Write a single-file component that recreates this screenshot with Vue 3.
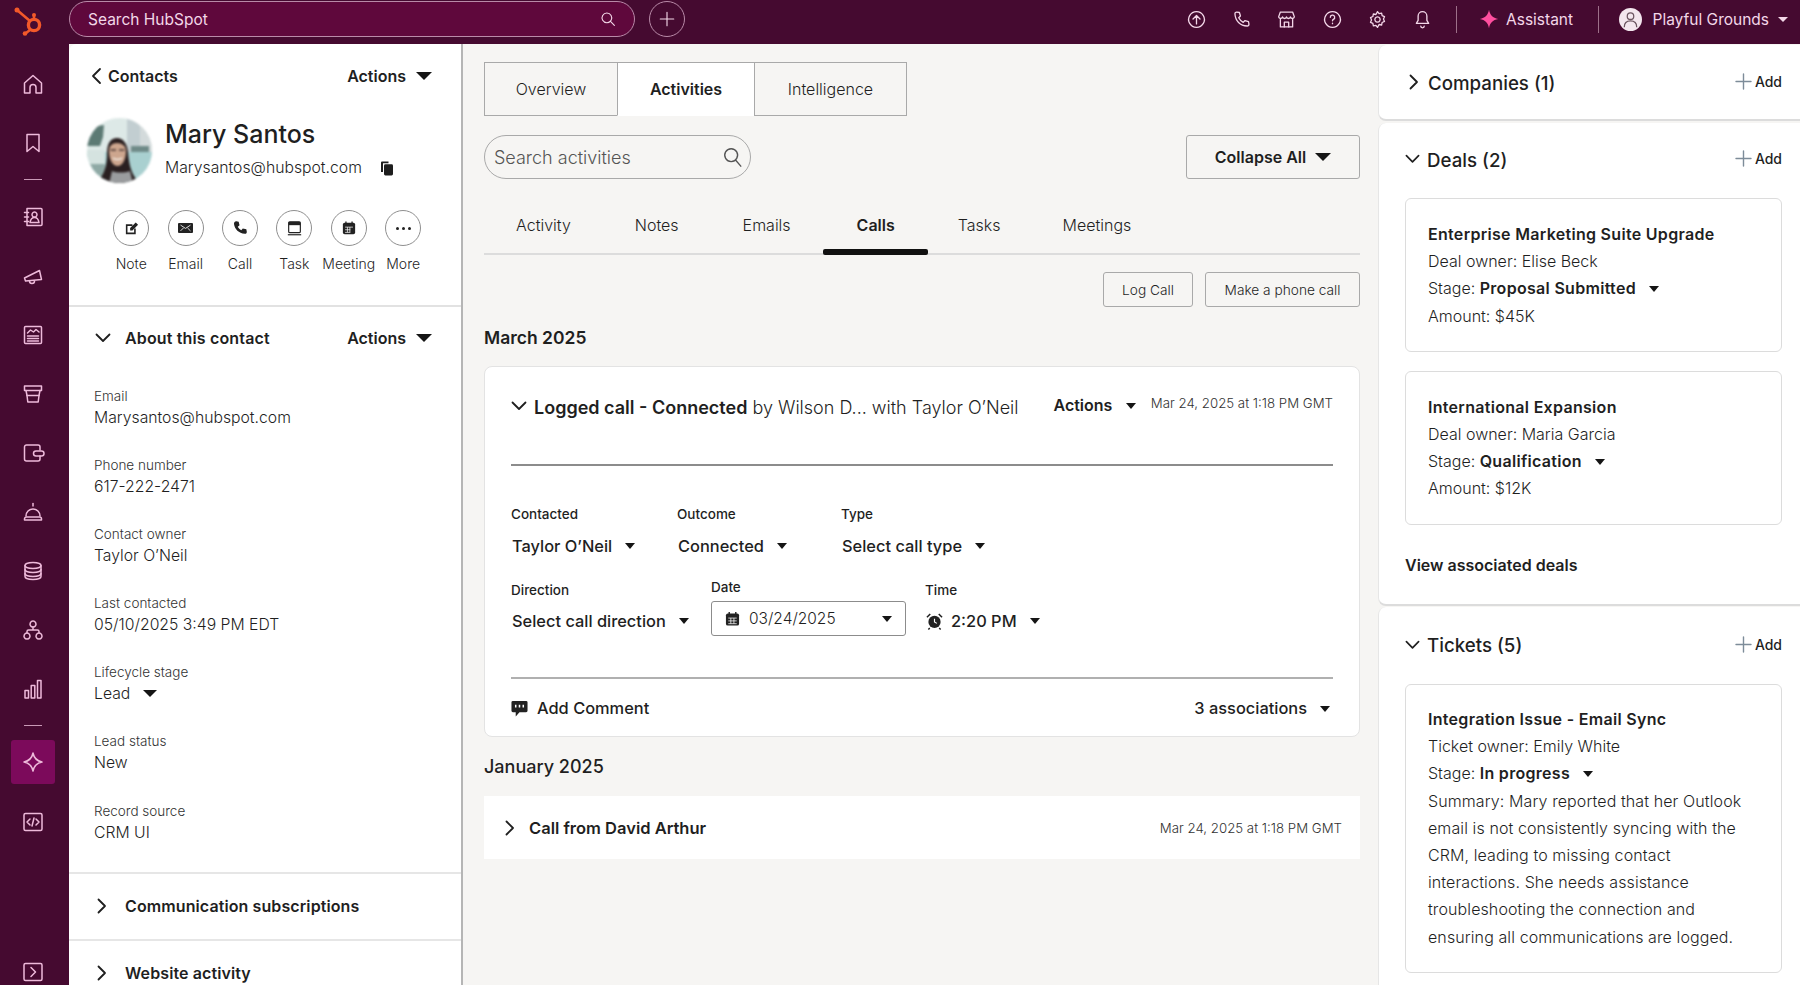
<template>
  <div class="page">
    <header class="topbar">
      <div class="logo-cell">
        <svg width="38" height="38" viewBox="0 0 38 38">
          <g fill="none" stroke="#f2592a" stroke-width="2.6">
            <circle cx="25" cy="22" r="5.6" stroke-width="3.4" />
            <path d="M8 7 21 18M25 15v-2M21 27l-4 3" />
          </g>
          <g fill="#f2592a">
            <circle cx="8" cy="7" r="2.5" />
            <circle cx="25" cy="12" r="2" />
            <circle cx="16" cy="30.5" r="2.3" />
          </g>
        </svg>
      </div>
      <div class="global-search">
        <span>Search HubSpot</span>
        <svg width="18" height="18" viewBox="0 0 24 24" class="line light"><path d="M10.5 4a6.5 6.5 0 1 0 .01 0zM15.3 15.3 20.5 20.5" /></svg>
      </div>
      <div class="plus-btn">
        <svg width="18" height="18" viewBox="0 0 24 24" class="line light"><path d="M12 3v18M3 12h18" /></svg>
      </div>
      <div class="top-right">
        <span v-for="icon in topIcons" :key="icon.name" class="top-icon">
          <svg width="21" height="21" viewBox="0 0 24 24" class="line light"><path v-for="d in icon.paths" :key="d" :d="d" /></svg>
        </span>
        <i class="top-sep"></i>
        <svg class="star" width="20" height="20" viewBox="0 0 24 24"><path fill="#ff4f9f" d="M12 1c1.2 6.5 4.5 9.8 11 11-6.5 1.2-9.8 4.5-11 11-1.2-6.5-4.5-9.8-11-11 6.5-1.2 9.8-4.5 11-11z" /></svg>
        <span class="assistant">Assistant</span>
        <i class="top-sep second"></i>
        <svg class="user-pic" width="23" height="23" viewBox="0 0 24 24">
          <circle cx="12" cy="12" r="12" fill="#f3e6ee" />
          <g fill="none" stroke="#6b5560" stroke-width="1.3">
            <circle cx="12" cy="8.5" r="3.4" />
            <path d="M5.5 20c0-4.5 2.7-6.5 6.5-6.5s6.5 2 6.5 6.5" />
          </g>
        </svg>
        <span class="account">Playful Grounds</span>
        <i class="caret tiny light-caret"></i>
      </div>
    </header>

    <div class="body">
      <nav class="rail">
        <template v-for="item in railItems" :key="item.name">
          <i v-if="item.sep" class="rail-sep"></i>
          <div v-else class="rail-item" :class="{ active: item.active, bottom: item.bottom }">
            <svg width="24" height="24" viewBox="0 0 24 24" class="line pink"><path v-for="d in item.paths" :key="d" :d="d" /></svg>
          </div>
        </template>
      </nav>

      <aside class="contact-panel">
        <div class="contacts-row">
          <div class="back">
            <svg width="14" height="18" viewBox="0 0 14 18" class="line dark"><path d="M10 2 3 9l7 7" /></svg>
            <span>Contacts</span>
          </div>
          <div class="actions-link">Actions <i class="caret big"></i></div>
        </div>

        <div class="profile">
          <svg class="avatar" width="65" height="65" viewBox="0 0 65 65">
            <defs><clipPath id="avatar-clip"><circle cx="32.5" cy="32.5" r="32.5" /></clipPath></defs>
            <g clip-path="url(#avatar-clip)">
              <rect width="65" height="65" fill="#dde9e7" />
              <rect x="40" y="0" width="13" height="34" fill="#c2ced1" />
              <rect x="53" y="8" width="12" height="28" fill="#d3dadb" />
              <rect x="0" y="34" width="65" height="31" fill="#a9d0d0" />
              <path d="M2 9l15-2-1 12-3 9H0z" fill="#5c7a74" />
              <rect x="0" y="32" width="18" height="14" fill="#d5e3e0" />
              <rect x="0" y="46" width="18" height="19" fill="#8fa9a5" />
              <rect x="44" y="28" width="18" height="6" fill="#6f8a88" />
              <path d="M12 62c5-6 8-14 8-27 0-10 4-15 10-15s10 5 11 14c1 12 3 20 8 27l-4 7H14z" fill="#2a1f20" />
              <path d="M22 33c0-5 3-8 8-8s9 3 9 8c0 9-4 15-8.500 15S22 42 22 33z" fill="#cda68e" />
              <path d="M23.500 32h5.500M32 32h5.500" stroke="#4a3733" stroke-width="1.3" />
              <path d="M26 40c2 2 7 2 9 0" stroke="#f6f1ea" stroke-width="1.6" fill="none" />
              <path d="M22 66l3-13c4 2 13 2 18 0l3 13z" fill="#9a9c9e" />
            </g>
          </svg>
          <div class="profile-text">
            <div class="name">Mary Santos</div>
            <div class="email">
              <span>Marysantos@hubspot.com</span>
              <svg width="14" height="15" viewBox="0 0 14 15" fill="#1d1d1d"><path d="M1 1.5A1 1 0 0 1 2 .5h6.5v1.8H3v8.7H1z" /><rect x="4" y="3.2" width="9" height="11.3" rx="1.4" /></svg>
            </div>
          </div>
        </div>

        <div class="quick-actions">
          <div v-for="action in quickActions" :key="action.label" class="quick">
            <span class="quick-circle">
              <svg v-if="action.label === 'Note'" width="15" height="15" viewBox="0 0 16 16"><path d="M2 3.5h7v1.7H3.700v7.100h7.100V8h1.700v6H2z" fill="#222" /><path d="M6.500 7.500 12.500 1.500 15 4 9 10H6.500z" fill="#222" /></svg>
              <svg v-else-if="action.label === 'Email'" width="15" height="12" viewBox="0 0 18 14"><rect y="1" width="18" height="12" rx="1.2" fill="#222" /><path d="M3 3.500 9 7.500l6-4M3 10.500l3.500-3.500M15 10.500 11.500 7" fill="none" stroke="#fff" stroke-width="1" /></svg>
              <svg v-else-if="action.label === 'Call'" width="16" height="16" viewBox="0 0 24 24"><path d="M6.500 1.800 10 2.500l1.300 5.300-2.600 2.300c1 2.200 3 4.200 5.200 5.200l2.300-2.600 5.300 1.300.7 3.500c.2 1.600-1 3.500-3 3.200C10 19.800 4.200 14 3 6c-.3-2.300 1.800-4.500 3.500-4.200z" fill="#222" /></svg>
              <svg v-else-if="action.label === 'Task'" width="15" height="15" viewBox="0 0 18 18"><rect x="2" y="1" width="14" height="13" rx="1.5" fill="none" stroke="#222" stroke-width="1.4" /><rect x="2" y="1" width="14" height="4" fill="#222" /><path d="M1 16.500h16" stroke="#222" stroke-width="1.4" /></svg>
              <svg v-else-if="action.label === 'Meeting'" width="14" height="14" viewBox="0 0 16 16"><rect x="1" y="2" width="14" height="13" rx="2" fill="#222" /><path d="M4.500 .5v3M11.500 .5v3" stroke="#222" stroke-width="1.5" /><path d="M3.500 7h9M3.500 10h6M6.200 7v6M9 7v6M3.500 13h6" stroke="#fff" stroke-width=".8" /></svg>
              <span v-else class="dots">
                <i></i><i></i><i></i>
              </span>
            </span>
            <span class="quick-label">{{ action.label }}</span>
          </div>
        </div>

        <div class="about-row">
          <div class="about-title">
            <svg width="16" height="10" viewBox="0 0 16 10" class="line dark"><path d="M1.5 1.5 8 8l6.5-6.5" /></svg>
            <span>About this contact</span>
          </div>
          <div class="actions-link">Actions <i class="caret big"></i></div>
        </div>

        <div class="fields">
          <div v-for="field in contactFields" :key="field.label" class="field">
            <div class="field-label">{{ field.label }}</div>
            <div class="field-value">{{ field.value }}<i v-if="field.caret" class="caret medium"></i></div>
          </div>
        </div>

        <div class="fold-row">
          <svg width="10" height="16" viewBox="0 0 10 16" class="line dark"><path d="M1.5 1.5 8 8l-6.5 6.500" /></svg>
          <span>Communication subscriptions</span>
        </div>
        <div class="fold-row">
          <svg width="10" height="16" viewBox="0 0 10 16" class="line dark"><path d="M1.5 1.5 8 8l-6.5 6.500" /></svg>
          <span>Website activity</span>
        </div>
      </aside>

      <main class="center">
        <div class="view-tabs">
          <div class="view-tab w1">Overview</div>
          <div class="view-tab w2 current">Activities</div>
          <div class="view-tab w3">Intelligence</div>
        </div>

        <div class="tool-row">
          <div class="activity-search">
            <span>Search activities</span>
            <svg width="22" height="22" viewBox="0 0 24 24" class="line grey"><path d="M10 3a7 7 0 1 0 .01 0zM15 15.5 20.500 22" /></svg>
          </div>
          <div class="collapse-btn">Collapse All <i class="caret big"></i></div>
        </div>

        <div class="sub-tabs">
          <div v-for="tab in subTabs" :key="tab" class="sub-tab" :class="{ selected: tab === 'Calls' }">{{ tab }}</div>
        </div>

        <div class="log-row">
          <div class="small-btn">Log Call</div>
          <div class="small-btn phone">Make a phone call</div>
        </div>

        <h3 class="month">March 2025</h3>

        <section class="call-card">
          <div class="call-head">
            <svg width="16" height="10" viewBox="0 0 16 10" class="line dark call-chev"><path d="M1.5 1.5 8 8l6.5-6.5" /></svg>
            <div class="call-title"><b>Logged call - Connected</b> by Wilson D... with Taylor O’Neil</div>
            <div class="call-actions">Actions <i class="caret small"></i></div>
            <div class="call-date">Mar 24, 2025 at 1:18 PM GMT</div>
          </div>

          <div class="form-row first">
            <div v-for="col in firstRow" :key="col.label" class="form-col" :style="{ width: col.width + 'px' }">
              <div class="form-label">{{ col.label }}</div>
              <div class="form-value">{{ col.value }}<i class="caret small"></i></div>
            </div>
          </div>

          <div class="form-row second-row">
            <div class="form-col dropped direction">
              <div class="form-label">Direction</div>
              <div class="form-value">Select call direction<i class="caret small"></i></div>
            </div>
            <div class="form-col date-col">
              <div class="form-label">Date</div>
              <div class="date-input">
                <svg width="15" height="16" viewBox="0 0 16 16"><rect x="1" y="2" width="14" height="13" rx="2" fill="#222" /><path d="M4.5 .5v3M11.5 .5v3" stroke="#222" stroke-width="1.5" /><path d="M3.5 7h9M3.5 10h9M3.5 13h9M6.2 7v6M9.5 7v6" stroke="#fff" stroke-width=".8" /></svg>
                <span>03/24/2025</span>
                <i class="caret small"></i>
              </div>
            </div>
            <div class="form-col dropped">
              <div class="form-label">Time</div>
              <div class="form-value">
                <svg class="alarm" width="17" height="18" viewBox="0 0 18 18"><circle cx="9" cy="10" r="6.5" fill="#222" /><path d="M9 6.5V10l2.5 1.5" stroke="#fff" stroke-width="1.2" fill="none" /><path d="M1 5 4.5 1.500M17 5l-3.500-3.500M4 16.500l-1.500 1.500M14 16.500l1.500 1.500" stroke="#222" stroke-width="1.6" /></svg>
                2:20 PM<i class="caret small"></i>
              </div>
            </div>
          </div>

          <div class="call-foot">
            <div class="comment">
              <svg width="17" height="17" viewBox="0 0 18 18"><path d="M2 1h14a1.5 1.5 0 0 1 1.500 1.500v9A1.500 1.500 0 0 1 16 13H9l-4 4.500V13H2A1.500 1.500 0 0 1 .5 11.500v-9A1.500 1.500 0 0 1 2 1z" fill="#222" /><path d="M5 5v3M9 5v3M13 5v3" stroke="#fff" stroke-width="1.6" /></svg>
              <span>Add Comment</span>
            </div>
            <div class="assoc">3 associations<i class="caret small"></i></div>
          </div>
        </section>

        <h3 class="month jan">January 2025</h3>

        <section class="call-row">
          <svg width="10" height="16" viewBox="0 0 10 16" class="line dark"><path d="M1.5 1.5 8 8l-6.5 6.500" /></svg>
          <b>Call from David Arthur</b>
          <span class="call-date">Mar 24, 2025 at 1:18 PM GMT</span>
        </section>
      </main>

      <aside class="side">
        <section class="side-card companies">
          <div class="side-head">
            <svg width="10" height="16" viewBox="0 0 10 16" class="line dark chev-r"><path d="M1.5 1.5 8 8l-6.5 6.500" /></svg>
            <h4>Companies (1)</h4>
            <span class="add"><svg width="17" height="17" viewBox="0 0 17 17" class="line slate"><path d="M8.5 1v15M1 8.5h15" /></svg>Add</span>
          </div>
        </section>

        <section class="side-card deals">
          <div class="side-head">
            <svg width="15" height="10" viewBox="0 0 16 10" class="line dark chev-d"><path d="M1.5 1.5 8 8l6.5-6.5" /></svg>
            <h4>Deals (2)</h4>
            <span class="add"><svg width="17" height="17" viewBox="0 0 17 17" class="line slate"><path d="M8.5 1v15M1 8.5h15" /></svg>Add</span>
          </div>
          <div v-for="deal in deals" :key="deal.title" class="record">
            <div class="record-title">{{ deal.title }}</div>
            <div>Deal owner: {{ deal.owner }}</div>
            <div>Stage: <b>{{ deal.stage }}</b><i class="caret small stage-caret"></i></div>
            <div>Amount: {{ deal.amount }}</div>
          </div>
          <div class="view-deals">View associated deals</div>
        </section>

        <section class="side-card tickets">
          <div class="side-head">
            <svg width="15" height="10" viewBox="0 0 16 10" class="line dark chev-d"><path d="M1.5 1.5 8 8l6.5-6.5" /></svg>
            <h4>Tickets (5)</h4>
            <span class="add"><svg width="17" height="17" viewBox="0 0 17 17" class="line slate"><path d="M8.5 1v15M1 8.5h15" /></svg>Add</span>
          </div>
          <div class="record">
            <div class="record-title">Integration Issue - Email Sync</div>
            <div>Ticket owner: Emily White</div>
            <div>Stage: <b>In progress</b><i class="caret small stage-caret"></i></div>
            <div v-for="line in summaryLines" :key="line" class="summary">{{ line }}</div>
          </div>
        </section>
      </aside>
    </div>
  </div>
</template>

<script setup>
const topIcons = [
  { name: 'upload', paths: ['M12 3a9 9 0 1 0 .01 0z', 'M12 17V8M8 11.5 12 7.5l4 4'] },
  { name: 'phone', paths: ['M6.6 3.5l3 .5 1.2 4-2 2a12 12 0 0 0 5.2 5.2l2-2 4 1.2.5 3c.1 1-.8 2.1-2 2C10.5 19.2 4.8 13.5 4.5 5.5c0-1.1 1-2.1 2.1-2z'] },
  { name: 'store', paths: ['M5 3.5h14l2 5.5a2.3 2.3 0 0 1-4.5 0 2.3 2.3 0 0 1-4.5 0 2.3 2.3 0 0 1-4.5 0 2.3 2.3 0 0 1-4.5 0z', 'M5 12v8.5h14V12', 'M9.5 20.5V15h5v5.5'] },
  { name: 'help', paths: ['M12 3a9 9 0 1 0 .01 0z', 'M9.5 9.5a2.5 2.5 0 1 1 3.5 2.3c-.7.4-1 .9-1 1.7', 'M12 16.2v.6'] },
  { name: 'settings', paths: ['M12 3l1.8 2.3 2.9-.6.6 2.9 2.7 1.2-1.2 2.7 1.2 2.7-2.7 1.2-.6 2.9-2.9-.6L12 21l-1.8-2.3-2.9.6-.6-2.9-2.7-1.2 1.2-2.7-1.2-2.7 2.7-1.2.6-2.9 2.9.6z', 'M12 9a3 3 0 1 0 .01 0z'] },
  { name: 'bell', paths: ['M12 3a5 5 0 0 0-5 5v5l-2 3.5h14L17 13V8a5 5 0 0 0-5-5z', 'M10 19.5a2 2 0 0 0 4 0'] }
]

const railItems = [
  { name: 'home', paths: ['M3.5 11 12 3.5l8.5 7.5v10H15v-5.5a3 3 0 0 0-6 0V21H3.5z'] },
  { name: 'bookmarks', paths: ['M6 3.5h12v17l-6-5-6 5z'] },
  { name: 'sep1', sep: true },
  { name: 'contacts', paths: ['M6 3.5h14a1 1 0 0 1 1 1v15a1 1 0 0 1-1 1H6z', 'M3.5 7.5h4M3.5 12h4M3.5 16.5h4', 'M13.5 7a2.5 2.5 0 1 0 .01 0z', 'M9 17.5c.5-3 2.2-5 4.5-5s4 2 4.5 5z'] },
  { name: 'marketing', paths: ['M3.5 14 18.5 6.5l2 9-16 1.5z', 'M8.5 17a2.5 2.5 0 0 0 5 0'] },
  { name: 'content', paths: ['M4.5 3.5h15a1 1 0 0 1 1 1v15a1 1 0 0 1-1 1h-15a1 1 0 0 1-1-1v-15a1 1 0 0 1 1-1z', 'M6.5 10l3-3 3 2 2.5-2.5L18 9', 'M6.5 13h11M6.5 15.5h11M6.5 18h11'] },
  { name: 'commerce', paths: ['M3.5 4h17v4.5h-17z', 'M5 8.5l1 5h12l1-5', 'M6 13.5l.8 6.5h10.4l.8-6.5'] },
  { name: 'wallet', paths: ['M19 9V6a2 2 0 0 0-2-2H5.5a2 2 0 0 0-2 2v12a2 2 0 0 0 2 2H17a2 2 0 0 0 2-2v-3', 'M15 10h5.5a1.7 1.7 0 0 1 0 5H15a2.5 2.5 0 0 1 0-5z'] },
  { name: 'service', paths: ['M12 3.5V6', 'M5 16a7 7 0 0 1 14 0', 'M3.5 20v-1a2 2 0 0 1 2-2h13a2 2 0 0 1 2 2v1z'] },
  { name: 'data', paths: ['M4 6.5c0-1.7 3.6-3 8-3s8 1.3 8 3-3.6 3-8 3-8-1.3-8-3z', 'M4 6.5v11c0 1.7 3.6 3 8 3s8-1.3 8-3v-11', 'M4 10.5c0 1.7 3.6 3 8 3s8-1.3 8-3', 'M4 14.5c0 1.7 3.6 3 8 3s8-1.3 8-3'] },
  { name: 'automation', paths: ['M12 3a3 3 0 1 0 .01 0z', 'M6 15a3 3 0 1 0 .01 0z', 'M18 15a3 3 0 1 0 .01 0z', 'M12 9v3M6 15v-1.5A1.5 1.5 0 0 1 7.5 12h9a1.5 1.5 0 0 1 1.5 1.5V15'] },
  { name: 'reports', paths: ['M4 13.5h3.5V21H4zM10.2 8.5h3.6V21h-3.6zM16.5 3.5H20V21h-3.5z'] },
  { name: 'sep2', sep: true },
  { name: 'breeze', active: true, paths: ['M12 3c1 5 4 8 9 9-5 1-8 4-9 9-1-5-4-8-9-9 5-1 8-4 9-9z'] },
  { name: 'dev', paths: ['M4.5 3.5h15A1.5 1.5 0 0 1 21 5v14a1.5 1.5 0 0 1-1.5 1.5h-15A1.5 1.5 0 0 1 3 19V5a1.5 1.5 0 0 1 1.5-1.5z', 'M9 9l-3 3 3 3M15 9l3 3-3 3M13 8l-2 8'] },
  { name: 'expand', bottom: true, paths: ['M4.5 3.5h15A1.5 1.5 0 0 1 21 5v14a1.5 1.5 0 0 1-1.5 1.5h-15A1.5 1.5 0 0 1 3 19V5a1.5 1.5 0 0 1 1.5-1.5z', 'M10 7.5l4.5 4.5-4.5 4.5'] }
]

const quickActions = [
  { label: 'Note' },
  { label: 'Email' },
  { label: 'Call' },
  { label: 'Task' },
  { label: 'Meeting' },
  { label: 'More' }
]

const contactFields = [
  { label: 'Email', value: 'Marysantos@hubspot.com' },
  { label: 'Phone number', value: '617-222-2471' },
  { label: 'Contact owner', value: 'Taylor O’Neil' },
  { label: 'Last contacted', value: '05/10/2025 3:49 PM EDT' },
  { label: 'Lifecycle stage', value: 'Lead', caret: true },
  { label: 'Lead status', value: 'New' },
  { label: 'Record source', value: 'CRM UI' }
]

const subTabs = ['Activity', 'Notes', 'Emails', 'Calls', 'Tasks', 'Meetings']

const firstRow = [
  { label: 'Contacted', value: 'Taylor O’Neil', width: 166 },
  { label: 'Outcome', value: 'Connected', width: 164 },
  { label: 'Type', value: 'Select call type', width: 200 }
]

const deals = [
  { title: 'Enterprise Marketing Suite Upgrade', owner: 'Elise Beck', stage: 'Proposal Submitted', amount: '$45K' },
  { title: 'International Expansion', owner: 'Maria Garcia', stage: 'Qualification', amount: '$12K' }
]

const summaryLines = [
  'Summary: Mary reported that her Outlook',
  'email is not consistently syncing with the',
  'CRM, leading to missing contact',
  'interactions. She needs assistance',
  'troubleshooting the connection and',
  'ensuring all communications are logged.'
]
</script>

<style>
html,
body {
  margin: 0;
  background: #f6f5f3;
}
</style>

<style scoped>
.page {
  width: 1800px;
  height: 985px;
  overflow: hidden;
  display: flex;
  flex-direction: column;
  font-family: Inter, "Noto Sans", sans-serif;
  color: #1f1f1f;
  background: #f6f5f3;
}

.line {
  fill: none;
  stroke-width: 1.5;
  stroke-linecap: round;
  stroke-linejoin: round;
}
.light { stroke: #f3d7e8; }
.pink { stroke: #eebada; }
.dark { stroke: #1f1f1f; stroke-width: 1.8; }
.grey { stroke: #555; }
.slate { stroke: #7d8c99; stroke-width: 1.4; }

.caret {
  display: inline-block;
  border-style: solid;
  border-color: #151515 transparent transparent;
}
.caret.big { border-width: 8px 8px 0; }
.caret.medium { border-width: 7px 7px 0; margin-left: 13px; vertical-align: 2px; }
.caret.small { border-width: 6px 5px 0; margin-left: 13px; vertical-align: 2px; }
.caret.tiny { border-width: 5px 5px 0; }
.light-caret { border-top-color: #f3d7e8; margin-left: 9px; }

/* top bar */
.topbar {
  height: 44px;
  flex: none;
  display: flex;
  align-items: center;
  background: #450a30;
}
.logo-cell {
  width: 69px;
  height: 44px;
  display: flex;
  align-items: center;
  padding-left: 9px;
  box-sizing: border-box;
}
.global-search {
  width: 566px;
  height: 36px;
  box-sizing: border-box;
  margin-bottom: 6px;
  padding: 0 17px 0 18px;
  display: flex;
  align-items: center;
  justify-content: space-between;
  border: 1px solid #b98aa8;
  border-radius: 18px;
  background: #5f083c;
  color: #f3d7e8;
  font-size: 15.5px;
}
.plus-btn {
  width: 36px;
  height: 36px;
  box-sizing: border-box;
  margin: 0 0 6px 14px;
  border: 1px solid #b98aa8;
  border-radius: 50%;
  display: flex;
  align-items: center;
  justify-content: center;
}
.top-right {
  margin-left: auto;
  margin-bottom: 6px;
  padding-right: 12px;
  height: 38px;
  display: flex;
  align-items: center;
  color: #f3d7e8;
  font-size: 15.5px;
}
.top-icon {
  width: 45.3px;
  display: flex;
  justify-content: center;
}
.top-sep {
  width: 1px;
  height: 27px;
  margin-left: 10px;
  background: #9d7089;
}
.star { margin: 0 7px 0 22.5px; }
.assistant { width: 71px; }
.top-sep.second { margin-left: 20.8px; }
.user-pic { margin: 0 10px 0 20.7px; }

.body {
  flex: 1;
  min-height: 0;
  display: flex;
}

/* left rail */
.rail {
  width: 69px;
  flex: none;
  padding: 10px 3px 0 0;
  box-sizing: border-box;
  display: flex;
  flex-direction: column;
  align-items: center;
  background: #450a30;
}
.rail-item {
  width: 44px;
  height: 59px;
  flex: none;
  display: flex;
  align-items: center;
  justify-content: center;
}
.rail-item.active {
  height: 44px;
  margin: 7px 0 8px;
  border-radius: 3px;
  background: #7c0a5b;
}
.rail-item.bottom {
  height: 26px;
  margin-top: auto;
}
.rail-sep {
  width: 18px;
  height: 1px;
  flex: none;
  margin: 7px 0;
  background: #c99ab6;
}

/* contact column */
.contact-panel {
  width: 394px;
  flex: none;
  box-sizing: border-box;
  border-right: 2px solid #b5b5b5;
  border-radius: 8px 0 0 0;
  background: #fff;
}
.contacts-row {
  height: 28px;
  padding: 18px 29px 0 21px;
  display: flex;
  align-items: center;
  justify-content: space-between;
}
.back {
  display: flex;
  align-items: center;
  gap: 4px;
  font-size: 16px;
  font-weight: 600;
}
.actions-link {
  display: flex;
  align-items: center;
  gap: 10px;
  font-size: 16px;
  font-weight: 600;
}
.profile {
  margin-top: 28px;
  padding-left: 18px;
  display: flex;
  gap: 13px;
}
.avatar {
  flex: none;
  filter: blur(0.8px);
}
.name {
  font-size: 25px;
  line-height: 32px;
  font-weight: 500;
}
.email {
  margin-top: 7px;
  display: flex;
  align-items: center;
  gap: 18px;
  font-size: 15.75px;
  line-height: 22px;
  font-weight: 300;
}
.quick-actions {
  margin-top: 27px;
  padding: 0 0 32px 35px;
  display: flex;
  border-bottom: 2px solid #e2e2e2;
}
.quick {
  width: 54.4px;
  display: flex;
  flex-direction: column;
  align-items: center;
}
.quick-circle {
  width: 36px;
  height: 36px;
  box-sizing: border-box;
  display: flex;
  align-items: center;
  justify-content: center;
  border: 1.5px solid #8f8f8f;
  border-radius: 50%;
}
.dots {
  display: flex;
  gap: 3px;
}
.dots i {
  width: 3px;
  height: 3px;
  border-radius: 50%;
  background: #222;
}
.quick-label {
  margin-top: 9px;
  font-size: 14px;
  line-height: 18px;
  font-weight: 300;
}
.about-row {
  height: 28px;
  margin-top: 17px;
  padding: 0 29px 0 26px;
  display: flex;
  align-items: center;
  justify-content: space-between;
}
.about-title {
  display: flex;
  align-items: center;
  gap: 14px;
  font-size: 16px;
  font-weight: 600;
  letter-spacing: 0.15px;
}
.fields {
  margin-top: 35px;
  padding: 0 0 28px 25px;
  display: flex;
  flex-direction: column;
  gap: 27.1px;
  border-bottom: 2px solid #e6e6e6;
}
.field-label {
  font-size: 13.5px;
  line-height: 18px;
  font-weight: 300;
  color: #333;
}
.field-value {
  margin-top: 2px;
  font-size: 15.75px;
  line-height: 22px;
  font-weight: 300;
}
.fold-row {
  height: 65px;
  padding-left: 28px;
  display: flex;
  align-items: center;
  gap: 18px;
  font-size: 16px;
  font-weight: 600;
  letter-spacing: 0.1px;
  border-bottom: 2px solid #e6e6e6;
}

/* activity column */
.center {
  flex: 1;
  min-width: 0;
  padding: 18px 18px 0 21px;
}
.view-tabs {
  display: flex;
}
.view-tab {
  height: 54px;
  box-sizing: border-box;
  display: flex;
  align-items: center;
  justify-content: center;
  border: 1.5px solid #a9a9a9;
  border-right-width: 0;
  font-size: 16px;
  font-weight: 300;
}
.view-tab:last-child {
  border-right-width: 1.5px;
}
.w1 { width: 133px; }
.w2 { width: 137px; }
.w3 { width: 153px; }
.view-tab.current {
  background: #fff;
  border-bottom-color: #fff;
  font-weight: 600;
}
.tool-row {
  margin-top: 19px;
  display: flex;
  justify-content: space-between;
}
.activity-search {
  width: 267px;
  height: 44px;
  box-sizing: border-box;
  padding: 0 6px 0 9px;
  display: flex;
  align-items: center;
  justify-content: space-between;
  border: 1.5px solid #a9a9a9;
  border-radius: 22px;
  font-size: 18px;
  font-weight: 300;
  color: #555;
}
.collapse-btn {
  width: 174px;
  height: 44px;
  box-sizing: border-box;
  display: flex;
  align-items: center;
  justify-content: center;
  gap: 9px;
  border: 1.5px solid #a9a9a9;
  border-radius: 3px;
  font-size: 16px;
  font-weight: 600;
}
.sub-tabs {
  height: 56px;
  margin-top: 18px;
  display: flex;
  border-bottom: 2px solid #dcdcdc;
}
.sub-tab {
  position: relative;
  padding: 0 32px;
  display: flex;
  align-items: center;
  font-size: 16px;
  font-weight: 300;
}
.sub-tab:last-child {
  margin-left: -2px;
}
.sub-tab.selected {
  padding: 0 31px 0 34px;
  font-weight: 600;
}
.sub-tab.selected::after {
  content: "";
  position: absolute;
  left: 0;
  right: -2px;
  bottom: -2px;
  height: 6px;
  border-radius: 2px;
  background: #111;
}
.log-row {
  margin-top: 17px;
  display: flex;
  justify-content: flex-end;
  gap: 12px;
}
.small-btn {
  width: 90px;
  height: 35px;
  box-sizing: border-box;
  display: flex;
  align-items: center;
  justify-content: center;
  border: 1.5px solid #a9a9a9;
  border-radius: 3px;
  font-size: 13.7px;
  font-weight: 300;
}
.small-btn.phone {
  width: 155px;
}
.month {
  margin: 18px 0 15px;
  font-size: 17.5px;
  line-height: 26px;
  font-weight: 600;
}
.month.jan {
  margin: 17px 0 16px;
  font-size: 18px;
  font-weight: 500;
}
.call-card {
  height: 371px;
  box-sizing: border-box;
  padding: 0 26px;
  border: 1px solid #e3e3e3;
  border-radius: 8px;
  background: #fff;
}
.call-head {
  height: 99px;
  box-sizing: border-box;
  padding-top: 22px;
  display: flex;
  align-items: flex-start;
  border-bottom: 2px solid #8c8c8c;
}
.call-chev {
  margin-top: 12px;
}
.call-title {
  margin: 6px 35px 0 7px;
  font-size: 18px;
  line-height: 26px;
  font-weight: 300;
  white-space: nowrap;
}
.call-title b {
  font-weight: 600;
}
.call-actions {
  margin-top: 3px;
  font-size: 16px;
  line-height: 26px;
  font-weight: 600;
  white-space: nowrap;
}
.call-actions .caret {
  margin-left: 10px;
}
.call-date {
  margin-top: 1px;
  margin-left: auto;
  font-size: 13.25px;
  line-height: 26px;
  font-weight: 300;
  color: #333;
  white-space: nowrap;
}
.form-row {
  display: flex;
}
.form-row.first {
  margin-top: 39px;
}
.second-row {
  margin-top: 20px;
}
.direction {
  width: 200px;
}
.date-col {
  width: 214px;
}
.form-label {
  font-size: 13.5px;
  line-height: 18px;
  font-weight: 500;
}
.form-value {
  margin-top: 11px;
  padding-left: 1px;
  display: flex;
  align-items: center;
  font-size: 16.4px;
  line-height: 24px;
  font-weight: 500;
}
.dropped {
  padding-top: 3px;
}
.dropped .form-value {
  margin-top: 10px;
}
.date-input {
  width: 195px;
  height: 35px;
  box-sizing: border-box;
  margin-top: 5px;
  padding: 0 13px;
  display: flex;
  align-items: center;
  border: 1.5px solid #8c8c8c;
  border-radius: 3px;
  font-size: 15.5px;
  font-weight: 300;
}
.date-input span {
  margin-left: 9px;
  margin-right: auto;
}
.alarm {
  margin-right: 8px;
}
.call-foot {
  height: 58px;
  margin-top: 41px;
  display: flex;
  align-items: center;
  justify-content: space-between;
  border-top: 2px solid #b0b0b0;
  font-size: 16.4px;
  font-weight: 500;
}
.comment {
  display: flex;
  align-items: center;
  gap: 9px;
}
.assoc {
  padding-right: 3px;
}
.call-row {
  height: 63px;
  box-sizing: border-box;
  padding: 0 18px 0 21px;
  display: flex;
  align-items: center;
  background: #fff;
}
.call-row b {
  margin-left: 14px;
  font-size: 16.5px;
  font-weight: 600;
}
.call-row .call-date {
  margin-top: 0;
}

/* association column */
.side {
  width: 422px;
  flex: none;
}
.side-card {
  box-sizing: border-box;
  padding: 0 18px 0 26px;
  border-left: 1px solid #e6e6e6;
  border-bottom: 2px solid #dcdcdc;
  border-radius: 8px 0 0 8px;
  background: #fff;
}
.companies {
  height: 76px;
  margin-top: 1px;
  padding-top: 1px;
}
.deals {
  height: 483px;
  margin-top: 2px;
}
.deals .side-head {
  margin-bottom: 1px;
}
.companies h4,
.deals h4 {
  margin-top: 2px;
}
.tickets {
  height: 400px;
  margin-top: 1px;
  padding-top: 2px;
}
.side-head {
  height: 72px;
  display: flex;
  align-items: center;
}
.side-head h4 {
  margin-bottom: 0;
  margin-left: 0;
  margin-right: 0;
  font-size: 18.7px;
  font-weight: 500;
}
.tickets h4 {
  margin-top: 0;
}
.chev-r { margin: 0 9px 0 4px; }
.chev-d { margin: 0 7px 0 0; }
.add {
  margin-left: auto;
  margin-bottom: 1px;
  display: flex;
  align-items: center;
  gap: 3px;
  font-size: 14px;
  font-weight: 500;
}
.record {
  box-sizing: border-box;
  margin-top: 3px;
  padding: 22px 16px 21px 22px;
  border: 1.5px solid #dcdcdc;
  border-radius: 6px;
  font-size: 16px;
  line-height: 27.2px;
  font-weight: 300;
}
.record + .record {
  margin-top: 19px;
}
.tickets .record {
  padding-top: 21px;
}
.record-title,
.record b {
  font-weight: 600;
  letter-spacing: 0.3px;
}
.summary {
  letter-spacing: 0.1px;
  white-space: nowrap;
}
.stage-caret {
  margin-left: 12px;
}
.view-deals {
  margin-top: 28px;
  font-size: 16px;
  line-height: 24px;
  font-weight: 600;
}
</style>
